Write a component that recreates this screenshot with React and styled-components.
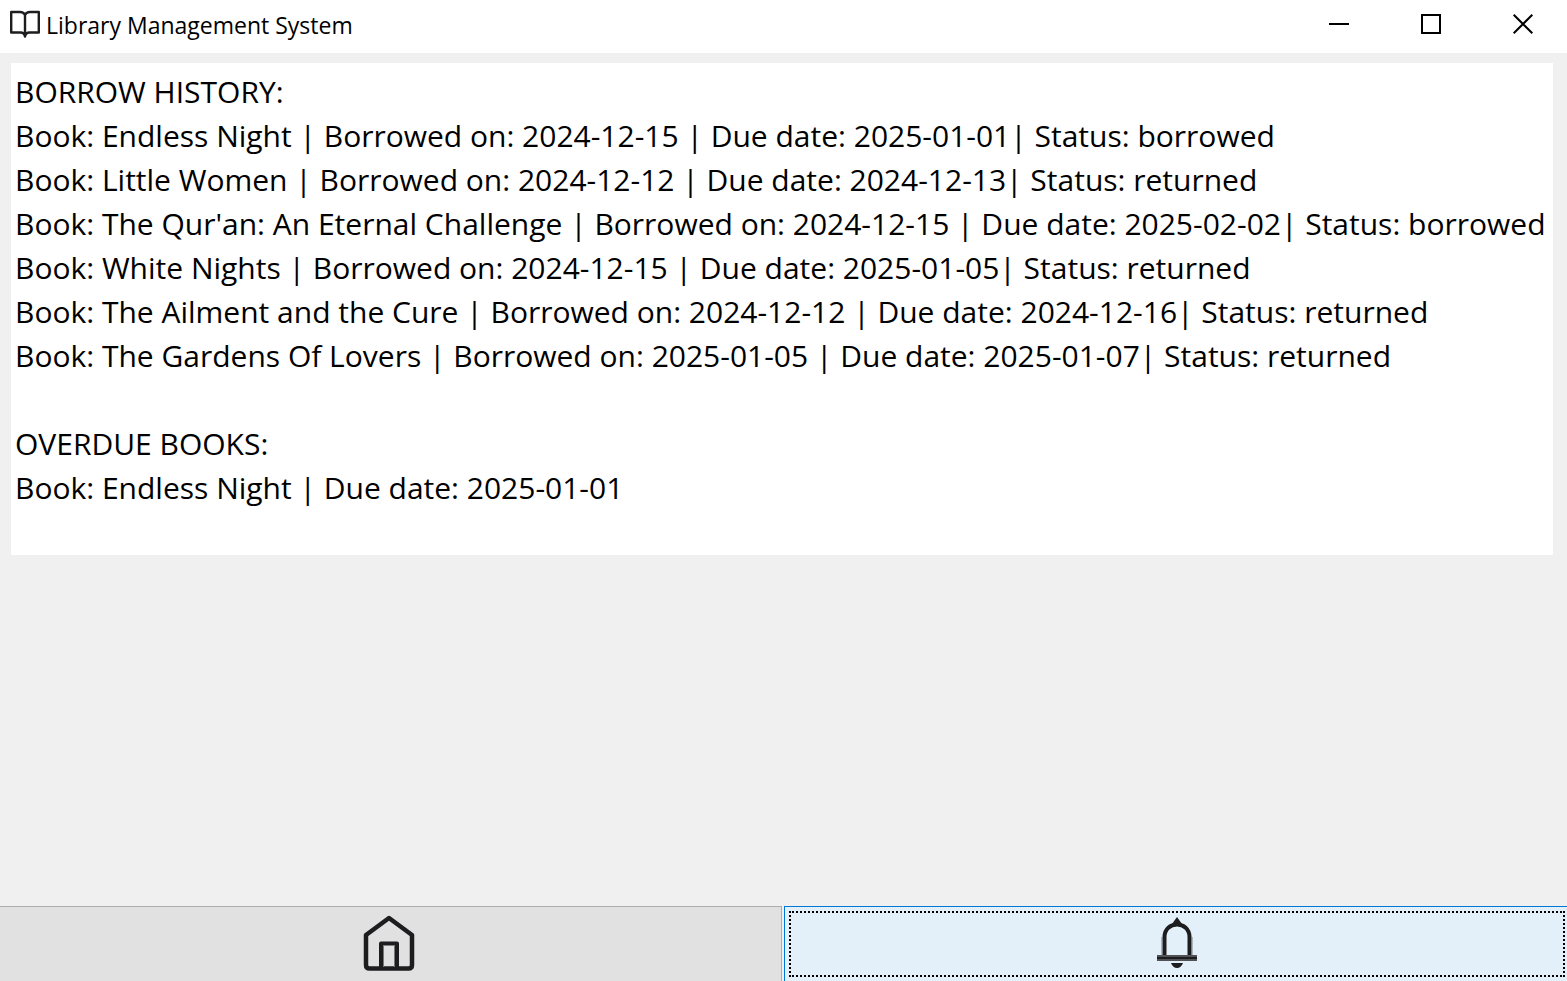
import React from "react";
import styled, { createGlobalStyle } from "styled-components";

const GlobalStyle = createGlobalStyle`
  * { box-sizing: border-box; }
  body {
    margin: 0;
    background: #f0f0f0;
    color: #000;
    font-family: "Segoe UI", "Open Sans", "Noto Sans", sans-serif;
  }
`;

const Window = styled.div`
  min-height: 100vh;
  display: flex;
  flex-direction: column;
  overflow: hidden;
`;

const TitleBar = styled.header`
  display: flex;
  align-items: flex-start;
  justify-content: space-between;
  height: 53px;
  background: #fff;
`;

const Brand = styled.div`
  display: flex;
  align-items: center;
  gap: 6px;
  height: 50px;
  padding-left: 10px;

  svg { margin-bottom: 3px; }
`;

const Title = styled.h1`
  margin: 0;
  font-size: 23px;
  line-height: 32px;
  font-weight: 400;
  white-space: nowrap;
`;

const Controls = styled.div`
  display: flex;
  margin-right: -2px;
`;

const ControlButton = styled.button`
  display: flex;
  align-items: center;
  justify-content: center;
  width: 92px;
  height: 48px;
  padding: 0;
  border: 0;
  background: transparent;
`;

const Content = styled.main`
  flex: 1;
  padding: 10px 14px 10px 11px;
`;

const Report = styled.div`
  display: flex;
  flex-direction: column;
  gap: 44px;
  padding: 7px 4px 45px;
  background: #fff;
`;

const Heading = styled.h2`
  margin: 0;
  font-size: 30px;
  line-height: 44px;
  font-weight: 400;
`;

const Lines = styled.ul`
  margin: 0;
  padding: 0;
  list-style: none;
`;

const Line = styled.li`
  font-size: 30px;
  line-height: 44px;
  white-space: nowrap;
`;

const NavBar = styled.nav`
  display: grid;
  grid-template-columns: 1fr 1fr;
  gap: 2px;
  margin-left: -1px;
`;

const NavButton = styled.button`
  display: flex;
  height: 75px;
  border: 0 solid ${(p) => (p.$active ? "#0078d7" : "#adadad")};
  border-top-width: 1px;
  border-left-width: ${(p) => (p.$active ? "1px" : "0")};
  border-right-width: ${(p) => (p.$active ? "0" : "1px")};
  padding: ${(p) => (p.$active ? "4px 2px 4px 4px" : "4px 6px 4px 4px")};
  background: ${(p) => (p.$active ? "#e3f0fa" : "#e1e1e1")};
`;

const FocusFrame = styled.span`
  flex: 1;
  align-self: stretch;
  display: flex;
  align-items: center;
  justify-content: center;
  border: 2px dotted ${(p) => (p.$active ? "#000" : "transparent")};
`;

const BookIcon = () => (
  <svg width="30" height="28" viewBox="0 0 30 28" fill="none" stroke="#1d1d20" strokeWidth="2.400" strokeLinejoin="round" aria-hidden="true">
    <path d="M15 5C14 2.800 12 2 10 2H1.200V22.500H10.500C13 22.500 14.500 23.500 15 26.500C15.500 23.500 17 22.500 19.500 22.500H28.800V2H20C18 2 16 2.800 15 5V26" />
  </svg>
);

const HomeIcon = () => (
  <svg width="52" height="58" viewBox="0 0 52 58" fill="none" stroke="#1d1d20" strokeWidth="4.500" aria-hidden="true">
    <path d="M26 3L49 20V50Q49 53.500 45.500 53.500H6.500Q3 53.500 3 50V20Z" strokeLinejoin="round" />
    <path d="M18 53V28.500H34V53" strokeWidth="4" strokeLinejoin="round" />
    <path d="M20.500 31V52M31.500 31V52" stroke="#77777a" strokeWidth="1" />
  </svg>
);

const BellIcon = () => (
  <svg width="40" height="54" viewBox="0 0 40 54" fill="none" stroke="#1d1d20" strokeWidth="4" aria-hidden="true">
    <path d="M7.500 39V20C7.500 12 13.500 7.500 20 7.500S32.500 12 32.500 20V39" />
    <path d="M5 39V20M35 39V20" stroke="#77797e" strokeWidth="1" />
    <path d="M20 0L25 7H15Z" fill="#1d1d20" stroke="none" />
    <path d="M0 38H40V44H0Z" fill="#1d1d20" stroke="none" />
    <path d="M0 39H40M0 43H40" stroke="#505256" strokeWidth="2" />
    <path d="M14 46H26Q24 51 20 51T14 46Z" fill="#1d1d20" stroke="none" />
  </svg>
);

const history = [
  ["Endless Night", "2024-12-15", "2025-01-01", "borrowed"],
  ["Little Women", "2024-12-12", "2024-12-13", "returned"],
  ["The Qur'an: An Eternal Challenge", "2024-12-15", "2025-02-02", "borrowed"],
  ["White Nights", "2024-12-15", "2025-01-05", "returned"],
  ["The Ailment and the Cure", "2024-12-12", "2024-12-16", "returned"],
  ["The Gardens Of Lovers", "2025-01-05", "2025-01-07", "returned"],
];

const overdue = [["Endless Night", "2025-01-01"]];

export default function App() {
  return (
    <Window>
      <GlobalStyle />
      <TitleBar>
        <Brand>
          <BookIcon />
          <Title>Library Management System</Title>
        </Brand>
        <Controls>
          <ControlButton type="button" aria-label="Minimize">
            <svg width="20" height="20" viewBox="0 0 20 20">
              <path d="M0 9H20V11H0Z" />
            </svg>
          </ControlButton>
          <ControlButton type="button" aria-label="Maximize">
            <svg width="20" height="20" viewBox="0 0 20 20">
              <path d="M1 1H19V19H1Z" fill="none" stroke="#000" strokeWidth="2" />
            </svg>
          </ControlButton>
          <ControlButton type="button" aria-label="Close">
            <svg width="20" height="20" viewBox="0 0 20 20">
              <path d="M.7.700L19.300 19.300M19.300.700L.7 19.300" stroke="#000" strokeWidth="2" />
            </svg>
          </ControlButton>
        </Controls>
      </TitleBar>
      <Content>
        <Report>
          <section>
            <Heading>BORROW HISTORY:</Heading>
            <Lines>
              {history.map(([title, from, due, status]) => (
                <Line key={title}>{`Book: ${title} | Borrowed on: ${from} | Due date: ${due}| Status: ${status}`}</Line>
              ))}
            </Lines>
          </section>
          <section>
            <Heading>OVERDUE BOOKS:</Heading>
            <Lines>
              {overdue.map(([title, due]) => (
                <Line key={title}>{`Book: ${title} | Due date: ${due}`}</Line>
              ))}
            </Lines>
          </section>
        </Report>
      </Content>
      <NavBar>
        <NavButton type="button" aria-label="Home">
          <FocusFrame><HomeIcon /></FocusFrame>
        </NavButton>
        <NavButton type="button" aria-label="Notifications" $active>
          <FocusFrame $active><BellIcon /></FocusFrame>
        </NavButton>
      </NavBar>
    </Window>
  );
}
